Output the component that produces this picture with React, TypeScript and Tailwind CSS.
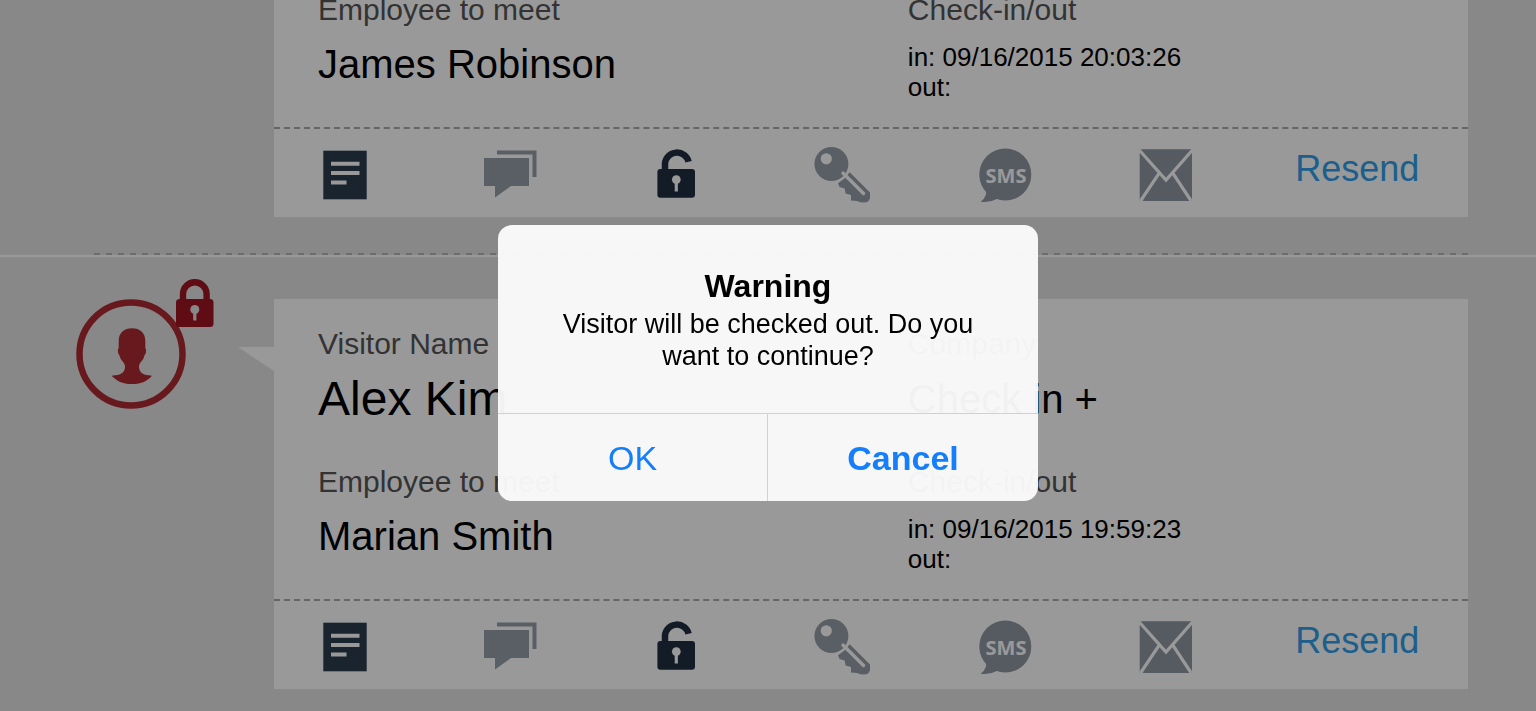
import React, { useState } from 'react';

interface Visit {
  id: number;
  visitor?: string;
  company?: string;
  employee: string;
  checkIn: string;
  checkOut: string;
}

const visits: Visit[] = [
  { id: 1, employee: 'James Robinson', checkIn: '09/16/2015 20:03:26', checkOut: '' },
  { id: 2, visitor: 'Alex Kim', company: 'Check in +', employee: 'Marian Smith', checkIn: '09/16/2015 19:59:23', checkOut: '' },
];

const NoteIcon = () => (
  <svg viewBox="0 0 64 64" className="size-16">
    <rect x="9.3" y="9.7" width="43.4" height="48.6" fill="#2a3d4e" />
    <path d="M17 22.7h28.5M17 32h28.5M17 41.5h15.5" stroke="#fff" strokeWidth="4" />
  </svg>
);

const ChatIcon = () => (
  <svg viewBox="0 0 64 64" className="size-16" fill="#969fa8">
    <path d="M5 17h45v28H32L16 56.5V45H5z" />
    <path d="M18 9.5h39.5V36h-4V13.5H18z" />
  </svg>
);

const UnlockIcon = () => (
  <svg viewBox="0 0 64 64" className="size-16">
    <rect x="13.4" y="28" width="37.6" height="28.7" rx="3" fill="#202f40" />
    <path d="M21 29v-6.5a12 12 0 0 1 23.6-1.8" fill="none" stroke="#202f40" strokeWidth="6.5" />
    <circle cx="32.3" cy="38.6" r="4.4" fill="#fff" />
    <path d="M32.3 40v10.5" stroke="#fff" strokeWidth="3.2" />
  </svg>
);

const KeyIcon = () => (
  <svg viewBox="0 0 64 64" className="size-16">
    <circle cx="22.4" cy="23" r="17" fill="#969fa8" />
    <circle cx="17.3" cy="17.8" r="5.6" fill="#fff" />
    <path
      d="M40.7 31.3 61 51.5V57Q60 61.500 55 61.500 51 61.500 48 60L42 59.500V54L36.500 52.500 35.700 47.500 30.500 46 29 42.300 35.500 37.500z"
      fill="#969fa8"
    />
    <path d="M34 32 54.500 52.500" stroke="#fff" strokeWidth="3.4" strokeLinecap="round" />
  </svg>
);

const SmsIcon = () => (
  <svg viewBox="0 0 64 64" className="size-16">
    <circle cx="32.3" cy="33.5" r="26" fill="#8f98a2" />
    <path d="M9 45Q14.500 49 13 53.500 11.500 58 7.600 60.700 16 62.200 25 57.500z" fill="#8f98a2" />
    <text x="33" y="41.5" textAnchor="middle" fontSize="20" className="font-['Open_Sans',sans-serif] font-bold" fill="#fff">SMS</text>
  </svg>
);

const MailIcon = () => (
  <svg viewBox="0 0 64 64" className="size-16">
    <rect x="1.7" y="8.3" width="52.3" height="51.7" rx="1" fill="#8f98a2" />
    <path d="M1 8.800 28 39 54.700 8.800M2.500 60 21 32.300M53.200 60 35 32.300" fill="none" stroke="#fff" strokeWidth="3.2" />
  </svg>
);

const actions = [
  { label: 'Notes', icon: NoteIcon },
  { label: 'Chat', icon: ChatIcon },
  { label: 'Unlock', icon: UnlockIcon },
  { label: 'Key', icon: KeyIcon },
  { label: 'SMS', icon: SmsIcon },
  { label: 'Mail', icon: MailIcon },
];

const Avatar = () => (
  <div className="relative size-[110px] shrink-0">
    <svg viewBox="0 0 110 110" className="size-full">
      <circle cx="55" cy="55" r="51.5" fill="none" stroke="#ae2b33" strokeWidth="6.5" />
      <path
        d="M56 29.300C64 29.300 69.300 34 69.300 42V49Q70.500 50 70 53C69.500 56 68.500 55.500 68 58 67 62 63 63.500 63 67.500 63 74 67 76 76 76.700 71 82 66 85 56 85S41 82 35.700 76.700C45 76 49 74 49 67.500 49 63.500 45 62 44 58 43.500 55.500 42.500 56 42 53Q41.500 50 42.700 49V42C42.700 34 48 29.300 56 29.300z"
        fill="#ae2b33"
      />
    </svg>
    <svg viewBox="0 0 38 48" className="absolute -top-5 left-[100px] h-12 w-[38px]">
      <rect y="20" width="37.5" height="28" rx="3.5" fill="#9e1424" />
      <path d="M7 21v-6a11.800 11.800 0 0 1 23.600 0v6" fill="none" stroke="#9e1424" strokeWidth="6.4" />
      <circle cx="18.8" cy="30.5" r="4.5" fill="#e3e3e3" />
      <path d="M18.800 32v9.500" stroke="#e3e3e3" strokeWidth="3.2" />
    </svg>
  </div>
);

const label = 'text-[30px] leading-9 text-[#555]';

const VisitCard = ({ visit }: { visit: Visit }) => (
  <article className="min-w-0 flex-1 bg-white">
    <div className={`grid grid-cols-[8fr_7fr] px-11 pb-[25px] ${visit.visitor ? 'pt-[27px]' : ''}`}>
      {visit.visitor && (
        <>
          <div className="pb-7">
            <p className={label}>Visitor Name</p>
            <h2 className="text-[48px] leading-[74px]">{visit.visitor}</h2>
          </div>
          <div className="pb-7">
            <p className={label}>Company</p>
            <p className="text-[40px] leading-[74px]">{visit.company}</p>
          </div>
        </>
      )}
      <div>
        <p className={label}>Employee to meet</p>
        <p className="text-[40px] leading-[72px]">{visit.employee}</p>
      </div>
      <div>
        <p className={label}>Check-in/out</p>
        <div className="pt-3.5 text-[26px] leading-[30px]">
          <p>in: {visit.checkIn}</p>
          <p>out: {visit.checkOut}</p>
        </div>
      </div>
    </div>
    <div className="grid h-[90px] grid-cols-7 items-center border-t-2 border-dashed border-[#aaa] pl-10">
      {actions.map(a => (
        <button key={a.label} type="button" aria-label={a.label} className="w-16">
          <a.icon />
        </button>
      ))}
      <button type="button" className="-ml-2 pb-2 text-left text-[36px] leading-10 text-[#2f9fea]">Resend</button>
    </div>
  </article>
);

const VisitRow = ({ visit }: { visit: Visit }) => (
  <li className="flex pr-[68px] pl-[76px]">
    <div className="flex w-[198px] shrink-0 items-start justify-between">
      {visit.visitor && (
        <>
          <Avatar />
          <svg viewBox="0 0 36 24" className="mt-12 h-6 w-9">
            <path d="M0 0h36v24z" fill="#fff" />
          </svg>
        </>
      )}
    </div>
    <VisitCard visit={visit} />
  </li>
);

const Divider = () => (
  <li aria-hidden="true" className="pt-9 pb-[42px]">
    <div className="mr-[68px] ml-[94px] h-0.5 bg-[repeating-linear-gradient(90deg,#b4b4b4_0_6px,transparent_6px_12px)]" />
    <div className="h-0.5 bg-white" />
  </li>
);

const App: React.FC = () => {
  const [open, setOpen] = useState(true);

  return (
    <main className="h-screen overflow-hidden bg-[#e3e3e3] font-['Liberation_Sans',sans-serif] text-black">
      <ul className="-mt-2">
        {visits.map((visit, i) => (
          <React.Fragment key={visit.id}>
            {i > 0 && <Divider />}
            <VisitRow visit={visit} />
          </React.Fragment>
        ))}
      </ul>

      {open && (
        <div className="fixed inset-0 flex items-center justify-center bg-black/40 pt-[15px]">
          <div
            role="alertdialog"
            aria-labelledby="alert-title"
            aria-describedby="alert-text"
            className="w-[540px] overflow-hidden rounded-[14px] bg-[#fbfbfb]/96 text-center"
          >
            <div className="px-12 pt-10 pb-[41px]">
              <h1 id="alert-title" className="pb-px text-[32px] leading-[42px] font-bold">Warning</h1>
              <p id="alert-text" className="text-[27px] leading-8">Visitor will be checked out. Do you want to continue?</p>
            </div>
            <div className="grid h-[88px] grid-cols-2 divide-x divide-[#cfd1d4] border-t border-[#cfd1d4] text-[34px] text-[#157efb]">
              <button type="button" onClick={() => setOpen(false)} className="pt-0.5">OK</button>
              <button type="button" onClick={() => setOpen(false)} className="pt-0.5 font-bold">Cancel</button>
            </div>
          </div>
        </div>
      )}
    </main>
  );
};

export default App;
